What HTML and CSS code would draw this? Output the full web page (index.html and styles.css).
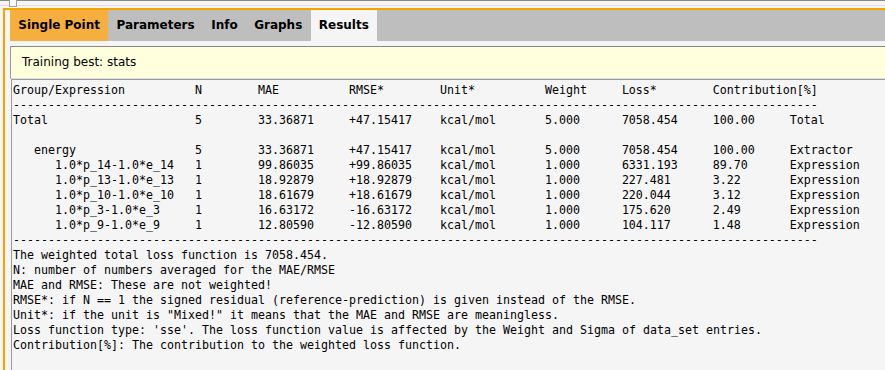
FILE: index.html
```
<!DOCTYPE html>
<html lang="en">
<head>
    <meta charset="UTF-8">
    <title>Results</title>
    <link rel="stylesheet" href="styles.css">
</head>
<body>
    <div class="topbar">
        <div class="sash"></div>
    </div>

    <div class="frame">
        <!-- Notebook tabs -->
        <div class="tabs">
            <div class="tab active">Single Point</div>
            <div class="tab">Parameters</div>
            <div class="tab">Info</div>
            <div class="tab">Graphs</div>
            <div class="tab current">Results</div>
        </div>

        <div class="banner">Training best: stats</div>

        <!-- Results text -->
        <div class="output">
            <div class="row">
                <span>Group/Expression</span><span>N</span><span>MAE</span><span>RMSE*</span><span>Unit*</span><span>Weight</span><span>Loss*</span><span>Contribution[%]</span><span></span>
            </div>
            <div class="rule">-------------------------------------------------------------------------------------------------------------------</div>
            <div class="row">
                <span>Total</span><span>5</span><span>33.36871</span><span>+47.15417</span><span>kcal/mol</span><span>5.000</span><span>7058.454</span><span>100.00</span><span>Total</span>
            </div>
            <div class="blank"></div>
            <div class="row">
                <span class="lvl1">energy</span><span>5</span><span>33.36871</span><span>+47.15417</span><span>kcal/mol</span><span>5.000</span><span>7058.454</span><span>100.00</span><span>Extractor</span>
            </div>
            <div class="row">
                <span class="lvl2">1.0*p_14-1.0*e_14</span><span>1</span><span>99.86035</span><span>+99.86035</span><span>kcal/mol</span><span>1.000</span><span>6331.193</span><span>89.70</span><span>Expression</span>
            </div>
            <div class="row">
                <span class="lvl2">1.0*p_13-1.0*e_13</span><span>1</span><span>18.92879</span><span>+18.92879</span><span>kcal/mol</span><span>1.000</span><span>227.481</span><span>3.22</span><span>Expression</span>
            </div>
            <div class="row">
                <span class="lvl2">1.0*p_10-1.0*e_10</span><span>1</span><span>18.61679</span><span>+18.61679</span><span>kcal/mol</span><span>1.000</span><span>220.044</span><span>3.12</span><span>Expression</span>
            </div>
            <div class="row">
                <span class="lvl2">1.0*p_3-1.0*e_3</span><span>1</span><span>16.63172</span><span>-16.63172</span><span>kcal/mol</span><span>1.000</span><span>175.620</span><span>2.49</span><span>Expression</span>
            </div>
            <div class="row">
                <span class="lvl2">1.0*p_9-1.0*e_9</span><span>1</span><span>12.80590</span><span>-12.80590</span><span>kcal/mol</span><span>1.000</span><span>104.117</span><span>1.48</span><span>Expression</span>
            </div>
            <div class="rule">-------------------------------------------------------------------------------------------------------------------</div>
            <div class="note">The weighted total loss function is 7058.454.</div>
            <div class="note">N: number of numbers averaged for the MAE/RMSE</div>
            <div class="note">MAE and RMSE: These are not weighted!</div>
            <div class="note">RMSE*: if N == 1 the signed residual (reference-prediction) is given instead of the RMSE.</div>
            <div class="note">Unit*: if the unit is "Mixed!" it means that the MAE and RMSE are meaningless.</div>
            <div class="note">Loss function type: 'sse'. The loss function value is affected by the Weight and Sigma of data_set entries.</div>
            <div class="note">Contribution[%]: The contribution to the weighted loss function.</div>
        </div>
    </div>
</body>
</html>
```

FILE: styles.css
```
body {
    margin: 0;
    background-color: #f5f5f5;
    font-family: "DejaVu Sans", sans-serif;
    font-size: 12px;
    color: #000;
    overflow: hidden;
}
.topbar {
    position: relative;
    height: 4px;
    border-top: 1px solid #8a8a8a;
    border-bottom: 1px solid #dcdcdc;
    margin-bottom: 2px;
}
.sash {
    position: absolute;
    left: 9px;
    top: -1px;
    width: 6px;
    height: 6px;
    background-color: #fafafa;
    border: 1px solid #a0a0a0;
    border-top: none;
}
.frame {
    margin-left: 3px;
    border-left: 2px solid #f5a300;
    border-top: 2px solid #f5a300;
    padding-left: 5px;
    height: calc(100vh - 10px);
    display: flex;
    flex-direction: column;
}
.tabs {
    display: flex;
    background-color: #bebebe;
    height: 31px;
}
.tab {
    font-weight: bold;
    line-height: 31px;
    padding: 0 8.25px;
}
.tab.active {
    background-color: #f6ae3e;
}
.tab.current {
    background-color: #f5f5f5;
}
.banner {
    margin-top: 5px;
    height: 31px;
    line-height: 31px;
    padding-left: 11px;
    background-color: #ffffdd;
    border-top: 1px solid #888;
    border-left: 1px solid #999;
    border-bottom: 1px solid #dddddd;
}
.output {
    flex: 1;
    margin-left: 1px;
    border-left: 1px solid #999;
    border-top: 1px solid #999;
    padding: 3px 0 0 1px;
    font-family: "DejaVu Sans Mono", monospace;
    font-size: 11.63px;
    line-height: 15px;
}
.row {
    display: grid;
    grid-template-columns: 26ch 9ch 13ch 13ch 15ch 11ch 13ch 11ch auto;
    height: 15px;
    white-space: pre;
}
.lvl1 {
    padding-left: 3ch;
}
.lvl2 {
    padding-left: 6ch;
}
.rule {
    white-space: pre;
}
.note {
    white-space: pre;
}
.blank {
    height: 15px;
}
```
